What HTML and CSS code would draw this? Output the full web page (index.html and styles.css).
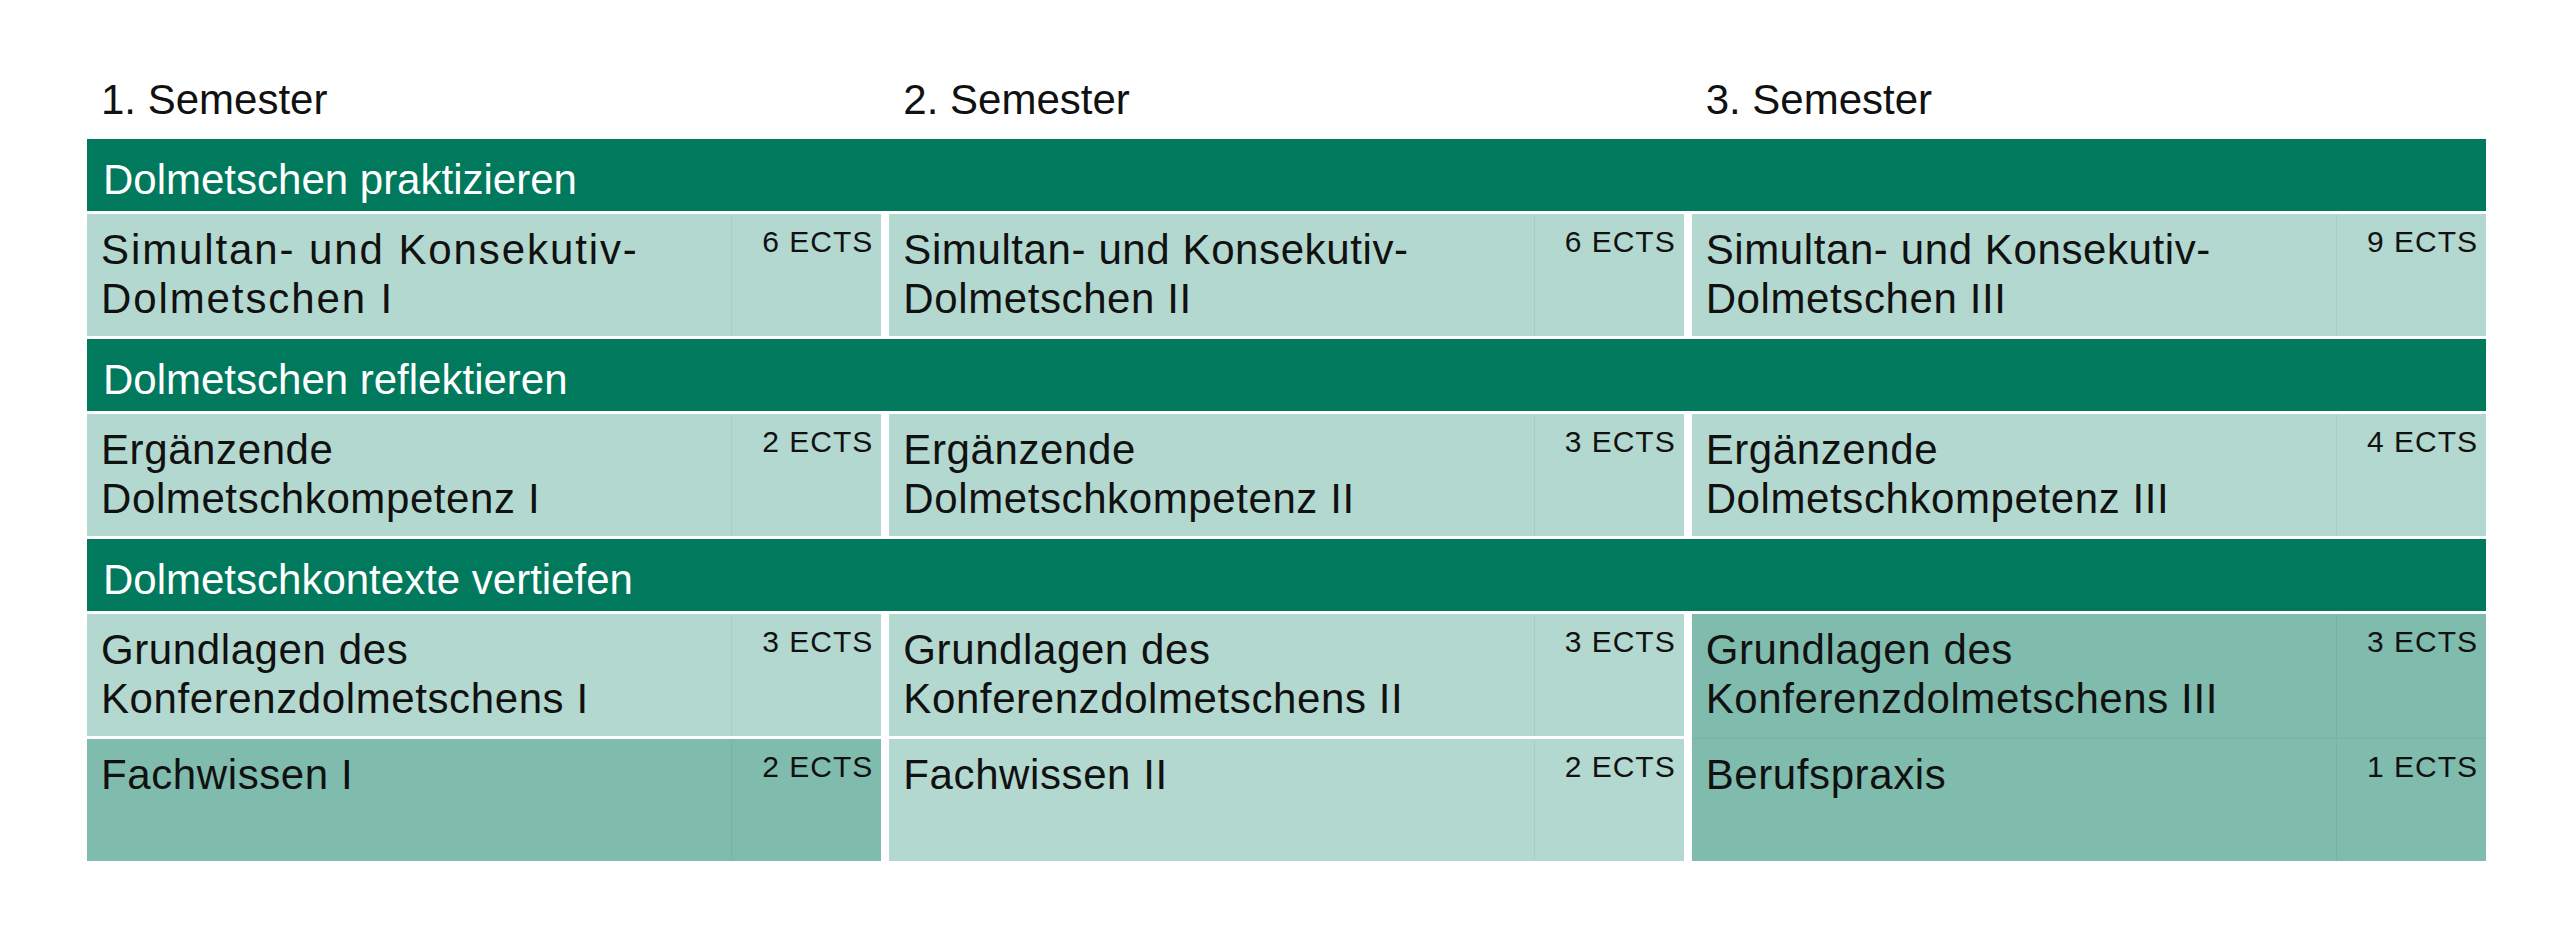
FILE: index.html
```html
<!DOCTYPE html>
<html lang="de">
<head>
<meta charset="utf-8">
<title>Studienplan</title>
<link rel="stylesheet" href="styles.css">
</head>
<body>
<div class="page">
  <div class="semesters">
    <div class="sem">1. Semester</div>
    <div class="sem">2. Semester</div>
    <div class="sem">3. Semester</div>
  </div>
  <div class="plan">
    <div class="head">Dolmetschen praktizieren</div>
    <div class="cell light"><div class="title wide">Simultan- und Konsekutiv-<br>Dolmetschen I</div><div class="ects">6 ECTS</div></div>
    <div class="cell light"><div class="title">Simultan- und Konsekutiv-<br>Dolmetschen II</div><div class="ects">6 ECTS</div></div>
    <div class="cell light"><div class="title">Simultan- und Konsekutiv-<br>Dolmetschen III</div><div class="ects">9 ECTS</div></div>

    <div class="head">Dolmetschen reflektieren</div>
    <div class="cell light"><div class="title">Ergänzende<br>Dolmetschkompetenz I</div><div class="ects">2 ECTS</div></div>
    <div class="cell light"><div class="title">Ergänzende<br>Dolmetschkompetenz II</div><div class="ects">3 ECTS</div></div>
    <div class="cell light"><div class="title">Ergänzende<br>Dolmetschkompetenz III</div><div class="ects">4 ECTS</div></div>

    <div class="head">Dolmetschkontexte vertiefen</div>
    <div class="cell light c1"><div class="title">Grundlagen des<br>Konferenzdolmetschens I</div><div class="ects">3 ECTS</div></div>
    <div class="cell light c2"><div class="title">Grundlagen des<br>Konferenzdolmetschens II</div><div class="ects">3 ECTS</div></div>
    <div class="stack mid c3">
      <div class="cell"><div class="title">Grundlagen des<br>Konferenzdolmetschens III</div><div class="ects">3 ECTS</div></div>
      <div class="cell sub"><div class="title">Berufspraxis</div><div class="ects">1 ECTS</div></div>
    </div>
    <div class="cell mid c1"><div class="title">Fachwissen I</div><div class="ects">2 ECTS</div></div>
    <div class="cell light c2"><div class="title">Fachwissen II</div><div class="ects">2 ECTS</div></div>
  </div>
</div>
</body>
</html>
```

FILE: styles.css
```css
html, body {
  margin: 0;
  padding: 0;
  background: #ffffff;
}

body {
  font-family: "Liberation Sans", Arial, sans-serif;
  color: #111111;
}

.page {
  padding: 76px 0 0 87px;
  width: 2399px;
}

.semesters {
  display: grid;
  grid-template-columns: repeat(3, 1fr);
  column-gap: 8px;
}

.sem {
  font-size: 42px;
  line-height: 48px;
  padding-left: 14px;
}

.plan {
  margin-top: 15px;
  display: grid;
  grid-template-columns: repeat(3, 1fr);
  grid-template-rows: 72px 122px 72px 122px 72px 122px 122px;
  column-gap: 8px;
  row-gap: 3px;
}

.head {
  grid-column: 1 / -1;
  box-sizing: border-box;
  background: #00795c;
  color: #ffffff;
  font-size: 42px;
  line-height: 48px;
  padding: 17px 0 0 16px;
}

.cell {
  display: grid;
  grid-template-columns: 1fr 150px;
  min-height: 0;
}

.light {
  background: #b3d8cf;
}

.mid {
  background: #80bcae;
}

.title {
  font-size: 42px;
  line-height: 48.5px;
  letter-spacing: 0.6px;
  padding: 12px 0 0 14px;
}

.title.wide {
  letter-spacing: 1.9px;
}

.ects {
  border-left: 1px solid rgba(0, 60, 40, 0.06);
  text-align: right;
  font-size: 30px;
  line-height: 34px;
  letter-spacing: 1px;
  padding: 11px 8px 0 0;
}

.c1 { grid-column: 1; }
.c2 { grid-column: 2; }
.c3 { grid-column: 3; }

.stack {
  grid-row: span 2;
  display: grid;
  grid-template-rows: 1fr 1fr;
}

.stack .sub {
  border-top: 1px solid rgba(0, 60, 40, 0.06);
}
```
